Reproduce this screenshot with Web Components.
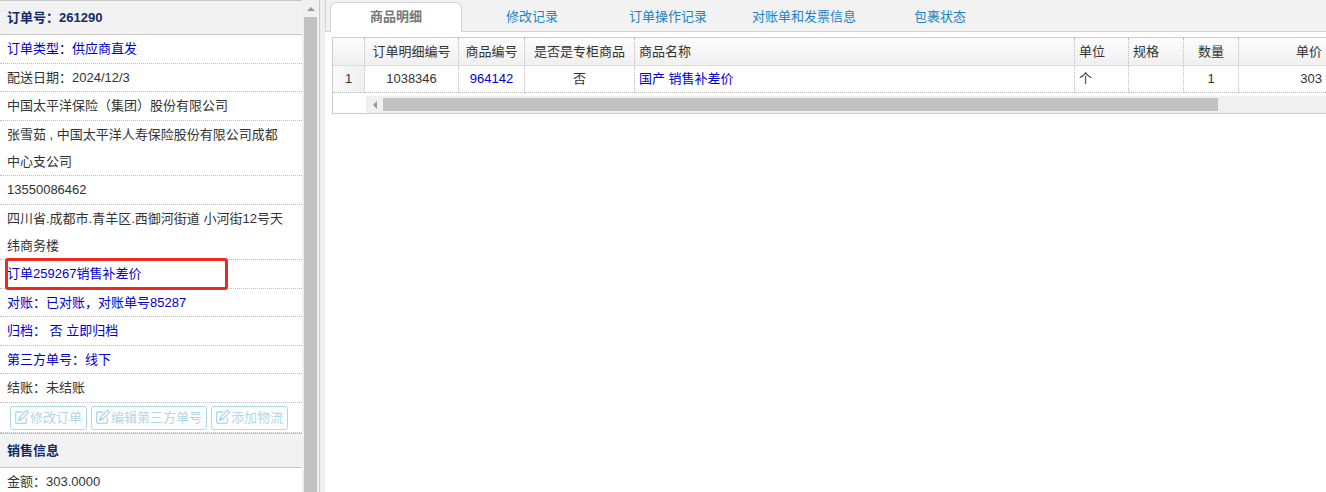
<!DOCTYPE html>
<html lang="zh-CN">
<head>
  <meta charset="utf-8">
  <meta name="viewport" content="width=device-width, initial-scale=1">
  <title>订单 261290</title>
  <style>
    html, body {
      height: 100%;
    }

    body {
      margin: 0;
      overflow: hidden;
      font: 13px/27px "Liberation Sans", "Noto Sans CJK SC", sans-serif;
      color: #333;
      --line: #ccc;
      --panel: #f2f2f2;
      --link: #0000d2;
    }
  </style>
</head>
<body>
  <order-page>
    <order-sidebar slot="side">
      <info-section heading="订单号：261290">
        <info-row href="#type">订单类型：供应商直发</info-row>
        <info-row>配送日期：2024/12/3</info-row>
        <info-row>中国太平洋保险（集团）股份有限公司</info-row>
        <info-row>张雪茹 , 中国太平洋人寿保险股份有限公司成都中心支公司</info-row>
        <info-row>13550086462</info-row>
        <info-row>四川省.成都市.青羊区.西御河街道 小河街12号天纬商务楼</info-row>
        <info-row href="#remark" marked>订单259267销售补差价</info-row>
        <info-row href="#bill">对账：已对账，对账单号85287</info-row>
        <info-row href="#archive">归档： 否 立即归档</info-row>
        <info-row href="#third">第三方单号：线下</info-row>
        <info-row>结账：未结账</info-row>
        <action-bar>
          <edit-button>修改订单</edit-button>
          <edit-button>编辑第三方单号</edit-button>
          <edit-button>添加物流</edit-button>
        </action-bar>
      </info-section>
      <info-section heading="销售信息">
        <info-row>金额：303.0000</info-row>
      </info-section>
    </order-sidebar>
    <tab-bar>
      <tab-item active>商品明细</tab-item>
      <tab-item>修改记录</tab-item>
      <tab-item>订单操作记录</tab-item>
      <tab-item>对账单和发票信息</tab-item>
      <tab-item>包裹状态</tab-item>
    </tab-bar>
    <goods-grid></goods-grid>
  </order-page>

  <script>
    class OrderPage extends HTMLElement {
      constructor() {
        super();
        this.shadowDOM = this.attachShadow({ mode: 'open' });
      }

      connectedCallback() {
        this.shadowDOM.innerHTML = `
          <style>
            :host {
              display: grid;
              grid-template-columns: 320px 5px minmax(0, 1fr);
              height: 100%;
              background: #fff;
            }

            .splitter {
              background: #efefef;
            }
          </style>
          <slot name="side"></slot>
          <div class="splitter"></div>
          <main><slot></slot></main>
        `;
      }
    }

    class OrderSidebar extends HTMLElement {
      constructor() {
        super();
        this.shadowDOM = this.attachShadow({ mode: 'open' });
      }

      connectedCallback() {
        this.shadowDOM.innerHTML = `
          <style>
            :host {
              display: flex;
              min-height: 0;
              overflow: hidden;
              border-right: 1px solid var(--line);
            }

            .content {
              flex: 1;
              min-width: 0;
            }
          </style>
          <div class="content"><slot></slot></div>
          <scroll-track direction="vertical"></scroll-track>
        `;
      }
    }

    class InfoSection extends HTMLElement {
      constructor() {
        super();
        this.shadowDOM = this.attachShadow({ mode: 'open' });
      }

      connectedCallback() {
        this.shadowDOM.innerHTML = `
          <style>
            :host {
              display: block;
            }

            h2 {
              margin: 0;
              padding: 3px 7px;
              border: solid #c8c8c8;
              border-width: 1px 0;
              background: var(--panel);
              color: #14286a;
              font-size: 13px;
              font-weight: bold;
            }

            ::slotted(info-row:nth-child(odd)) {
              padding-bottom: 1px;
            }
          </style>
          <h2>${this.getAttribute('heading')}</h2>
          <slot></slot>
        `;
      }
    }

    class InfoRow extends HTMLElement {
      constructor() {
        super();
        this.shadowDOM = this.attachShadow({ mode: 'open' });
      }

      connectedCallback() {
        const href = this.getAttribute('href');
        this.shadowDOM.innerHTML = `
          <style>
            :host {
              display: block;
              position: relative;
              padding: 0 14px 0 7px;
              border-bottom: 1px dotted #bbb;
            }

            a {
              color: var(--link);
              text-decoration: none;
            }

            .mark {
              position: absolute;
              inset: -2px 74px -2px 5px;
              border: 3px solid #ea2a20;
              border-radius: 3px;
              pointer-events: none;
            }
          </style>
          ${href ? `<a href="${href}"><slot></slot></a>` : '<slot></slot>'}
          ${this.hasAttribute('marked') ? '<div class="mark"></div>' : ''}
        `;
      }
    }

    class ActionBar extends HTMLElement {
      constructor() {
        super();
        this.shadowDOM = this.attachShadow({ mode: 'open' });
      }

      connectedCallback() {
        this.shadowDOM.innerHTML = `
          <style>
            :host {
              display: flex;
              gap: 4px;
              padding: 3px 10px 2px;
              border-bottom: 1px dotted #bbb;
            }
          </style>
          <slot></slot>
        `;
      }
    }

    class EditButton extends HTMLElement {
      constructor() {
        super();
        this.shadowDOM = this.attachShadow({ mode: 'open' });
      }

      connectedCallback() {
        this.shadowDOM.innerHTML = `
          <style>
            :host {
              display: block;
            }

            button {
              display: flex;
              align-items: center;
              gap: 1px;
              height: 24px;
              padding: 0 4px;
              border: 1px solid #add8e6;
              border-radius: 3px;
              background: #fff;
              color: #add8e6;
              font: inherit;
              line-height: 22px;
              white-space: nowrap;
              cursor: pointer;
            }

            svg {
              width: 14px;
              height: 14px;
              margin-bottom: 2px;
              fill: none;
              stroke: currentColor;
              stroke-width: 1.3;
            }
          </style>
          <button type="button">
            <svg viewBox="0 0 14 14" aria-hidden="true">
              <path d="M7.500 2H1.500Q.7 2 .7 2.800V12.500Q.7 13.300 1.500 13.300H10.500Q11.300 13.300 11.300 12.500V7.500"/>
              <path d="M3.500 10.500L4.500 7.300L11 .8Q12 .3 12.800 1.200Q13.600 2.100 13 2.900L6.700 9.400Z M4.500 7.300L6.700 9.400"/>
            </svg>
            <slot></slot>
          </button>
        `;
      }
    }

    class ScrollTrack extends HTMLElement {
      constructor() {
        super();
        this.shadowDOM = this.attachShadow({ mode: 'open' });
      }

      connectedCallback() {
        this.shadowDOM.innerHTML = `
          <style>
            :host {
              display: flex;
              background: #f0f0f0;
            }

            :host([direction="vertical"]) {
              flex-direction: column;
              width: 17px;
            }

            :host([direction="horizontal"]) {
              height: 17px;
            }

            .arrow {
              display: grid;
              place-items: center;
              flex: 0 0 17px;
            }

            .arrow svg {
              display: block;
              width: 8px;
              height: 8px;
              fill: #999;
            }

            :host([direction="horizontal"]) svg {
              transform: rotate(-90deg);
            }

            .thumb {
              background: #c1c1c1;
            }

            :host([direction="vertical"]) .thumb {
              flex: 1;
              margin: 0 2px;
            }

            :host([direction="horizontal"]) .thumb {
              width: 87%;
              margin: 2px 0;
            }
          </style>
          <div class="arrow"><svg viewBox="0 0 8 8"><path d="M0 6l4-4 4 4z"/></svg></div>
          <div class="thumb"></div>
        `;
      }
    }

    class TabBar extends HTMLElement {
      constructor() {
        super();
        this.shadowDOM = this.attachShadow({ mode: 'open' });
      }

      connectedCallback() {
        this.shadowDOM.innerHTML = `
          <style>
            :host {
              display: flex;
              gap: 4px;
              padding: 2px 4px 0;
              border: solid #d3d3d3;
              border-width: 0 0 1px 1px;
              background: var(--panel);
            }
          </style>
          <slot></slot>
        `;
        this.setAttribute('role', 'tablist');
      }
    }

    class TabItem extends HTMLElement {
      constructor() {
        super();
        this.shadowDOM = this.attachShadow({ mode: 'open' });
      }

      connectedCallback() {
        this.shadowDOM.innerHTML = `
          <style>
            :host {
              display: block;
              width: 132px;
            }

            :host([active]) {
              margin-bottom: -1px;
            }

            button {
              display: block;
              width: 100%;
              height: 29px;
              padding: 0;
              border: 0;
              background: none;
              color: #1c84c6;
              font: inherit;
              cursor: pointer;
            }

            :host([active]) button {
              height: 30px;
              padding-bottom: 2px;
              border: 1px solid #d3d3d3;
              border-bottom: 0;
              border-radius: 6px 6px 0 0;
              background: #fff;
              color: #777;
              font-weight: bold;
            }
          </style>
          <button type="button" role="tab" aria-selected="${this.hasAttribute('active')}"><slot></slot></button>
        `;
      }
    }

    class GoodsGrid extends HTMLElement {
      constructor() {
        super();
        this.shadowDOM = this.attachShadow({ mode: 'open' });
      }

      connectedCallback() {
        this.shadowDOM.innerHTML = `
          <style>
            ${this.getStyle()}
          </style>
          <table>
            <colgroup>
              <col style="width: 32px">
              <col style="width: 94px">
              <col style="width: 66px">
              <col style="width: 110px">
              <col>
              <col style="width: 54px">
              <col style="width: 55px">
              <col style="width: 55px">
              <col style="width: 87px">
            </colgroup>
            <thead>
              <tr>
                <th></th>
                <th>订单明细编号</th>
                <th>商品编号</th>
                <th>是否是专柜商品</th>
                <th class="left">商品名称</th>
                <th class="left">单位</th>
                <th class="left">规格</th>
                <th>数量</th>
                <th class="right">单价</th>
              </tr>
            </thead>
            <tbody>
              <tr>
                <td class="number">1</td>
                <td>1038346</td>
                <td><a href="#goods">964142</a></td>
                <td>否</td>
                <td class="left"><a href="#goods">国产 销售补差价</a></td>
                <td class="left">个</td>
                <td></td>
                <td>1</td>
                <td class="right">303</td>
              </tr>
            </tbody>
          </table>
          <scroll-track direction="horizontal"></scroll-track>
        `;
      }

      // eslint-disable-next-line class-methods-use-this
      getStyle() {
        return `
          :host {
            display: block;
            margin: 5px 0 0 7px;
            border: solid #ccc;
            border-width: 1px 0 1px 1px;
          }

          table {
            width: 100%;
            table-layout: fixed;
            border-collapse: separate;
            border-spacing: 0;
          }

          th, td {
            box-sizing: border-box;
            height: 27px;
            padding: 0 4px;
            border-right: 1px dotted #bbb;
            border-bottom: 1px dotted #bbb;
            line-height: 26px;
            font-weight: normal;
            text-align: center;
            white-space: nowrap;
          }

          th {
            height: 28px;
            border-bottom: 1px solid #ddd;
          }

          thead tr {
            background: linear-gradient(#fcfcfc, #efefef);
          }

          .number {
            background: linear-gradient(to right, #fafafa, #efefef);
          }

          .left {
            text-align: left;
          }

          .right {
            border-right: 0;
            text-align: right;
          }

          a {
            color: var(--link);
            text-decoration: none;
          }

          scroll-track {
            margin: 3px 0 0 33px;
          }
        `;
      }
    }

    customElements.define('order-page', OrderPage);
    customElements.define('order-sidebar', OrderSidebar);
    customElements.define('info-section', InfoSection);
    customElements.define('info-row', InfoRow);
    customElements.define('action-bar', ActionBar);
    customElements.define('edit-button', EditButton);
    customElements.define('scroll-track', ScrollTrack);
    customElements.define('tab-bar', TabBar);
    customElements.define('tab-item', TabItem);
    customElements.define('goods-grid', GoodsGrid);
  </script>
</body>
</html>
